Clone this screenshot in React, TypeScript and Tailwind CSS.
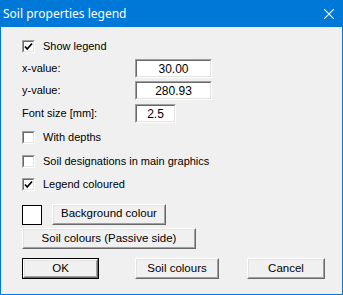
import React from "react";

const font = { fontFamily: '"Liberation Sans", Arial, sans-serif' };

function Check({ checked }: { checked?: boolean }) {
	return (
		<span className="relative inline-block w-[13px] h-[13px] bg-white border border-t-[#a0a0a0] border-l-[#a0a0a0] border-r-white border-b-white">
			<span className="absolute inset-0 border border-t-[#696969] border-l-[#696969] border-r-[#e3e3e3] border-b-[#e3e3e3]" />
			{checked && (
				<svg viewBox="0 0 13 13" className="absolute inset-0 w-[13px] h-[13px] -m-px">
					<path d="M3 6.5 L5.2 9 L10 3.5" stroke="#000" strokeWidth="1.8" fill="none" />
				</svg>
			)}
		</span>
	);
}

function CheckRow({ label, checked, className }: { label: string; checked?: boolean; className?: string }) {
	return (
		<div className={`flex items-center h-[13px] ${className ?? ""}`}>
			<Check checked={checked} />
			<span className="ml-[8px] text-[11px] text-black leading-none">{label}</span>
		</div>
	);
}

function Field({ value, w }: { value: string; w: string }) {
	return (
		<div className={`${w} h-[19px] bg-white border border-t-[#a0a0a0] border-l-[#a0a0a0] border-r-white border-b-white`}>
			<div className="w-full h-full border border-t-[#696969] border-l-[#696969] border-r-[#e3e3e3] border-b-[#e3e3e3] flex items-center justify-center text-[12px] text-black leading-none">
				{value}
			</div>
		</div>
	);
}

function Btn({ label, w, def }: { label: string; w: string; def?: boolean }) {
	return (
		<div className={`${w} h-[21px] ${def ? "border border-black" : ""}`}>
			<div className="w-full h-full border border-t-white border-l-white border-r-[#696969] border-b-[#696969]">
				<div className="w-full h-full border border-t-[#e3e3e3] border-l-[#e3e3e3] border-r-[#a0a0a0] border-b-[#a0a0a0] bg-[#f0f0f0] flex items-center justify-center text-[11.5px] text-black leading-none">
					{label}
				</div>
			</div>
		</div>
	);
}

export default function App() {
	return (
		<div className="w-[343px] h-[295px] bg-[#f0f0f0] border border-[#0078d7] border-t-0 flex flex-col" style={font}>
			{/* title bar */}
			<div className="h-[27px] bg-[#0078d7] flex items-center justify-between pl-[3px] pr-[9px] -mx-px">
				<span className="text-white text-[12px]" style={{ fontFamily: '"Noto Sans", sans-serif' }}>
					Soil properties legend
				</span>
				<svg viewBox="0 0 10 10" className="w-[10px] h-[10px]">
					<path d="M0 0 L10 10 M10 0 L0 10" stroke="#fff" strokeWidth="1.1" />
				</svg>
			</div>

			<div className="pl-[21px] flex flex-col">
				<CheckRow label="Show legend" checked className="mt-[13px]" />

				<div className="flex items-center h-[19px] mt-[6px]">
					<span className="w-[113px] text-[11px]">x-value:</span>
					<Field value="30.00" w="w-[77px]" />
				</div>
				<div className="flex items-center h-[19px] mt-[3px]">
					<span className="w-[113px] text-[11px]">y-value:</span>
					<Field value="280.93" w="w-[77px]" />
				</div>
				<div className="flex items-center h-[19px] mt-[4px]">
					<span className="w-[113px] text-[11px]">Font size [mm]:</span>
					<Field value="2.5" w="w-[41px]" />
				</div>

				<CheckRow label="With depths" className="mt-[8px]" />
				<CheckRow label="Soil designations in main graphics" className="mt-[11px]" />
				<CheckRow label="Legend coloured" checked className="mt-[10px]" />

				<div className="flex items-center mt-[12px] h-[22px]">
					<div className="w-[20px] h-[20px] bg-white border border-black mt-[2px]" />
					<div className="ml-[10px]">
						<Btn label="Background colour" w="w-[114px]" />
					</div>
				</div>
				<div className="mt-[3px]">
					<Btn label="Soil colours (Passive side)" w="w-[174px]" />
				</div>
				<div className="flex mt-[9px] h-[21px]">
					<Btn label="OK" w="w-[77px]" def />
					<div className="ml-[36px]">
						<Btn label="Soil colours" w="w-[84px]" />
					</div>
					<div className="ml-[28px]">
						<Btn label="Cancel" w="w-[78px]" />
					</div>
				</div>
			</div>
		</div>
	);
}
